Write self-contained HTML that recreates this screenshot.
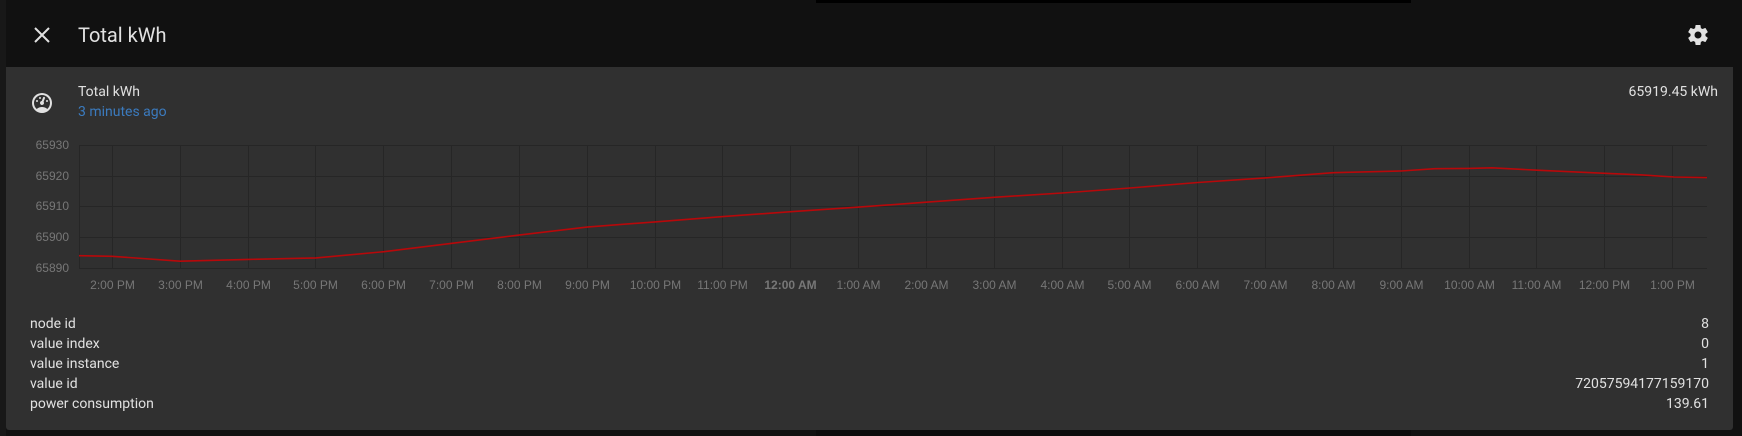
<!DOCTYPE html>
<html><head><meta charset="utf-8"><style>
*{margin:0;padding:0;box-sizing:border-box}
body{width:1742px;height:436px;background:#111;font-family:"Roboto","Liberation Sans",sans-serif;position:relative;overflow:hidden;color:#e1e1e1}
.abs{position:absolute}
.panel{left:6px;top:67px;width:1727px;height:363px;background:#303030;border-radius:0 0 3px 3px}
.attr{position:absolute;left:30px;font-size:14px;line-height:20px;color:#e1e1e1}
.val{position:absolute;right:33px;font-size:14px;line-height:20px;text-align:right;color:#e1e1e1}
</style></head><body>
<div class="abs" style="left:0;top:0;width:6px;height:436px;background:#181818"></div>
<div class="abs" style="left:816px;top:0;width:595px;height:3px;background:#000"></div>
<div class="abs" style="left:816px;top:430px;width:595px;height:6px;background:#0c0c0c"></div>
<svg class="abs" style="left:32px;top:25px" width="20" height="20" viewBox="0 0 20 20"><path d="M3 3L17 17M17 3L3 17" stroke="#e1e1e1" stroke-width="2"/></svg>
<div class="abs" style="left:78px;top:22px;font-size:20px;line-height:26px;color:#e1e1e1">Total kWh</div>
<svg class="abs" style="left:1686px;top:23px" width="24" height="24" viewBox="0 0 24 24"><path fill="#e1e1e1" d="M12,15.5A3.5,3.5 0 0,1 8.5,12A3.5,3.5 0 0,1 12,8.5A3.5,3.5 0 0,1 15.5,12A3.5,3.5 0 0,1 12,15.5M19.43,12.97C19.47,12.65 19.5,12.33 19.5,12C19.5,11.67 19.47,11.34 19.43,11L21.54,9.37C21.730,9.22 21.78,8.95 21.66,8.73L19.66,5.27C19.54,5.05 19.27,4.96 19.05,5.05L16.56,6.05C16.04,5.66 15.5,5.32 14.87,5.07L14.5,2.42C14.46,2.18 14.25,2 14,2H10C9.75,2 9.54,2.18 9.5,2.42L9.13,5.07C8.5,5.32 7.96,5.66 7.44,6.05L4.95,5.05C4.73,4.96 4.46,5.05 4.34,5.27L2.34,8.73C2.21,8.95 2.27,9.22 2.46,9.37L4.57,11C4.53,11.34 4.5,11.67 4.5,12C4.5,12.33 4.53,12.65 4.57,12.97L2.46,14.63C2.27,14.78 2.21,15.05 2.34,15.27L4.34,18.73C4.46,18.95 4.73,19.03 4.95,18.95L7.44,17.94C7.96,18.34 8.5,18.68 9.13,18.93L9.5,21.58C9.54,21.82 9.75,22 10,22H14C14.25,22 14.46,21.82 14.5,21.58L14.87,18.93C15.5,18.67 16.04,18.34 16.56,17.94L19.05,18.95C19.27,19.03 19.54,18.95 19.66,18.73L21.66,15.27C21.78,15.05 21.73,14.78 21.54,14.63L19.43,12.97Z"/></svg>
<div class="abs panel"></div>
<svg class="abs" style="left:30px;top:91px" width="24" height="24" viewBox="0 0 24 24"><path fill="#e1e1e1" d="M12,2A10,10 0 0,0 2,12A10,10 0 0,0 12,22A10,10 0 0,0 22,12A10,10 0 0,0 12,2M12,4A8,8 0 0,1 20,12C20,14.4 19,16.5 17.3,18C15.9,16.7 14,16 12,16C10,16 8.2,16.7 6.7,18C5,16.5 4,14.4 4,12A8,8 0 0,1 12,4M14,5.89C13.62,5.9 13.26,6.15 13.1,6.54L11.81,9.77L11.71,10C11,10.13 10.41,10.6 10.14,11.26C9.73,12.29 10.23,13.45 11.26,13.86C12.29,14.27 13.45,13.77 13.86,12.74C14.12,12.08 14,11.32 13.57,10.76L13.67,10.5L14.96,7.29L14.97,7.26C15.17,6.75 14.92,6.17 14.41,5.96C14.28,5.91 14.15,5.89 14,5.89M10,6A1,1 0 0,0 9,7A1,1 0 0,0 10,8A1,1 0 0,0 11,7A1,1 0 0,0 10,6M7,9A1,1 0 0,0 6,10A1,1 0 0,0 7,11A1,1 0 0,0 8,10A1,1 0 0,0 7,9M17,9A1,1 0 0,0 16,10A1,1 0 0,0 17,11A1,1 0 0,0 18,10A1,1 0 0,0 17,9Z"/></svg>
<div class="abs" style="left:78px;top:83px;font-size:14px;line-height:18px">Total kWh</div>
<div class="abs" style="left:78px;top:103px;font-size:14px;line-height:18px;color:#3b7bbf">3 minutes ago</div>
<div class="abs" style="right:24px;top:83px;font-size:14px;line-height:18px">65919.45 kWh</div>
<svg class="abs" style="left:0;top:0" width="1742" height="320" font-family="Liberation Sans, sans-serif" font-size="12">
<g stroke="#262626" stroke-width="1">
<line x1="79" y1="145.5" x2="1707" y2="145.5"/><line x1="79" y1="176.5" x2="1707" y2="176.5"/><line x1="79" y1="206.5" x2="1707" y2="206.5"/><line x1="79" y1="237.5" x2="1707" y2="237.5"/><line x1="79" y1="268.5" x2="1707" y2="268.5"/>
<line x1="79.5" y1="145" x2="79.5" y2="268"/>
<g id="v"></g>
</g>
<g fill="#777" text-anchor="end">
<text x="69" y="149">65930</text><text x="69" y="180">65920</text><text x="69" y="210">65910</text><text x="69" y="241">65900</text><text x="69" y="272">65890</text>
</g>
<g id="xl" fill="#777" text-anchor="middle"></g>
<polyline fill="none" stroke="#b8080a" stroke-width="1.6" points="79,255.7 112,256.3 180,261.2 248,259.4 316,257.9 384,251.7 451,243.4 519,235.1 587,227.1 655,221.9 723,216.6 791,211.7 859,207.1 926,202.2 994,197.3 1062,193 1130,188 1198,182.5 1265,177.9 1333,172.7 1401,171 1435,168.7 1469,168.4 1492,167.8 1537,170.2 1605,173.3 1640,174.8 1674,177 1707,177.6"/>
</svg>
<div class="attr" style="top:314px">node id</div><div class="val" style="top:314px">8</div>
<div class="attr" style="top:334px">value index</div><div class="val" style="top:334px">0</div>
<div class="attr" style="top:354px">value instance</div><div class="val" style="top:354px">1</div>
<div class="attr" style="top:374px">value id</div><div class="val" style="top:374px">72057594177159170</div>
<div class="attr" style="top:394px">power consumption</div><div class="val" style="top:394px">139.61</div>
<script>
var labels=["2:00 PM","3:00 PM","4:00 PM","5:00 PM","6:00 PM","7:00 PM","8:00 PM","9:00 PM","10:00 PM","11:00 PM","12:00 AM","1:00 AM","2:00 AM","3:00 AM","4:00 AM","5:00 AM","6:00 AM","7:00 AM","8:00 AM","9:00 AM","10:00 AM","11:00 AM","12:00 PM","1:00 PM"];
var ns="http://www.w3.org/2000/svg",v=document.getElementById("v"),xl=document.getElementById("xl");
labels.forEach(function(l,i){var x=Math.round(112+67.83*i)+0.5;
var ln=document.createElementNS(ns,"line");ln.setAttribute("x1",x);ln.setAttribute("x2",x);ln.setAttribute("y1",145);ln.setAttribute("y2",268);v.appendChild(ln);
var t=document.createElementNS(ns,"text");t.setAttribute("x",x);t.setAttribute("y",289);t.textContent=l;if(l=="12:00 AM")t.setAttribute("font-weight","bold");xl.appendChild(t);});
</script>
</body></html>
